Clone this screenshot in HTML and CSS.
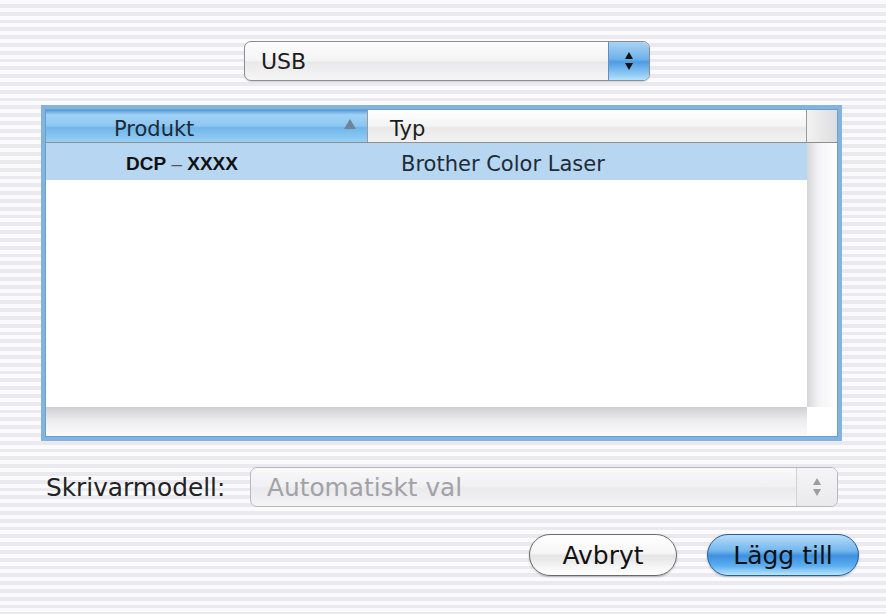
FILE: index.html
```html
<!DOCTYPE html>
<html lang="sv">
<head>
    <meta charset="UTF-8">
    <title>Lägg till skrivare</title>
    <link rel="stylesheet" href="styles.css">
</head>
<body>
<div class="dialog">
    <div class="popup usb">
        <span class="popup-text">USB</span>
        <span class="stepper"><i class="up"></i><i class="down"></i></span>
    </div>

    <div class="table-frame">
        <div class="table">
            <div class="header">
                <div class="th produkt">Produkt<i class="sort"></i></div>
                <div class="th typ">Typ</div>
            </div>
            <div class="th corner"></div>
            <div class="rows">
                <div class="row selected">
                    <span class="cell name"><b>DCP</b> <em>–</em> XXXX</span>
                    <span class="cell type">Brother Color Laser</span>
                </div>
            </div>
            <div class="vscroll"></div>
            <div class="hscroll"></div>
            <div class="scroll-corner"></div>
        </div>
    </div>

    <div class="model-row">
        <label class="model-label">Skrivarmodell:</label>
        <div class="popup disabled">
            <span class="popup-text">Automatiskt val</span>
            <span class="stepper"><i class="up"></i><i class="down"></i></span>
        </div>
    </div>

    <div class="buttons">
        <a href="javascript:;" class="btn">Avbryt</a>
        <a href="javascript:;" class="btn default">Lägg till</a>
    </div>
</div>
</body>
</html>
```

FILE: styles.css
```css
*{
    margin: 0;
    padding: 0;
    box-sizing: border-box;
}
a{
    text-decoration: none;
}
html, body {
    height: 100%;
}
body {
    font-family: "DejaVu Sans", "Liberation Sans", sans-serif;
    color: #1c1c1c;
    /* Aqua pinstripes */
    background: repeating-linear-gradient(to bottom,
        #fbfbfd 0, #fbfbfd 3.9px,
        #e9e9ef 3.9px, #e9e9ef 7.8px);
}
.dialog {
    padding: 41px 27px 0 41px;
    display: flex;
    flex-direction: column;
}

/* pop-up menus */
.popup {
    display: flex;
    align-items: center;
    height: 40px;
    border: 1px solid #8c8c8c;
    border-radius: 7px;
    background: linear-gradient(#fdfdfd, #f3f3f4 50%, #e8e8ea 52%, #f6f6f7);
    box-shadow: 0 1px 1px rgba(0,0,0,.15);
    overflow: hidden;
}
.popup-text {
    flex: 1;
    padding-left: 16px;
    font-size: 22px;
}
.stepper {
    width: 41px;
    height: 100%;
    display: flex;
    flex-direction: column;
    align-items: center;
    justify-content: center;
    gap: 4px;
    background: linear-gradient(#a9d3f3, #6eb1ea 45%, #4d9be2 52%, #8fcaf4 85%, #b8e2fb);
    border-left: 1px solid #5d8fc4;
}
.stepper i {
    width: 0;
    height: 0;
    border-left: 4px solid transparent;
    border-right: 4px solid transparent;
}
.stepper .up {
    border-bottom: 7px solid #111;
}
.stepper .down {
    border-top: 7px solid #111;
}
.usb {
    width: 406px;
    margin-left: 203px;
}
.disabled {
    flex: 1;
    border-color: #b9b9bc;
    background: linear-gradient(#f9f9fa, #f0f0f2 50%, #eaeaed 52%, #f4f4f6);
    box-shadow: none;
}
.disabled .popup-text {
    color: #a2a2a6;
    font-size: 24.8px;
}
.disabled .stepper {
    background: linear-gradient(#f5f5f7, #eaeaed);
    border-left: 1px solid #d2d2d6;
    width: 41px;
}
.disabled .up {
    border-bottom-color: #9c9ca2;
}
.disabled .down {
    border-top-color: #9c9ca2;
}

/* table view */
.table-frame {
    margin-top: 24px;
    width: 801px;
    height: 336px;
    border: 4px solid #82b4de;
    box-shadow: inset 0 0 0 1px #6aa0d0;
    padding: 1px;
    background: #fff;
}
.table {
    height: 100%;
    display: grid;
    grid-template-columns: 1fr 30px;
    grid-template-rows: 33px 1fr 29px;
}
.header {
    display: flex;
    border-bottom: 1px solid #8e8e8e;
}
.th {
    position: relative;
    font-size: 21px;
    line-height: 32px;
    padding-top: 3px;
    background: linear-gradient(#ffffff, #f4f4f4 50%, #e9e9e9 55%, #f2f2f2);
    border-right: 1px solid #9a9a9a;
}
.produkt {
    width: 322px;
    padding-left: 68px;
    color: #1d2a36;
    background: linear-gradient(#4f9ad8, #a2d2f5 15%, #8cc6f0 50%, #6fb6ea 55%, #98cff4);
}
.typ {
    flex: 1;
    padding-left: 22px;
}
.corner {
    border-right: none;
    border-bottom: 1px solid #8e8e8e;
    background: linear-gradient(to right, #f2f2f2, #dedee0);
}
.sort {
    position: absolute;
    right: 11px;
    top: 9px;
    width: 0;
    height: 0;
    border-left: 6px solid transparent;
    border-right: 6px solid transparent;
    border-bottom: 10px solid #6e849a;
}
.rows {
    background: #fff;
}
.row {
    display: flex;
    height: 37px;
    align-items: center;
    padding-top: 4px;
}
.selected {
    background: #b6d6f1;
}
.cell {
    color: #1f2b37;
}
.name {
    width: 322px;
    padding-left: 80px;
    font-family: "Liberation Sans", Arial, sans-serif;
    font-size: 19px;
    font-weight: bold;
    color: #111;
}
.name em {
    font-style: normal;
    font-weight: normal;
    color: #555;
}
.type {
    padding-left: 33px;
    font-size: 21px;
}
.vscroll {
    background: linear-gradient(to right, #d6d6da, #f4f4f6 40%, #ffffff);
}
.hscroll {
    background: linear-gradient(#cfcfd3, #ececee 45%, #fbfbfc);
}
.scroll-corner {
    background: #fff;
}

/* bottom controls */
.model-row {
    margin-top: 26px;
    display: flex;
    align-items: center;
    padding-left: 5px;
    width: 797px;
}
.model-label {
    font-size: 24.8px;
    width: 204px;
    color: #222;
}
.buttons {
    margin-top: 27px;
    display: flex;
    justify-content: flex-end;
    gap: 30px;
}
.btn {
    height: 42px;
    border-radius: 21px;
    display: flex;
    align-items: center;
    justify-content: center;
    font-size: 25px;
    color: #111;
    width: 148px;
    border: 1px solid #6b6b6b;
    background: linear-gradient(#ffffff, #f6f6f6 45%, #e4e4e4 52%, #f8f8f8 85%, #ffffff);
    box-shadow: 0 1px 2px rgba(0,0,0,.25);
}
.default {
    width: 152px;
    border-color: #2a5c98;
    background: linear-gradient(#b8ddf8, #72b6ee 40%, #3d8fe0 52%, #5eb0f0 78%, #b9e6fc);
}
```
